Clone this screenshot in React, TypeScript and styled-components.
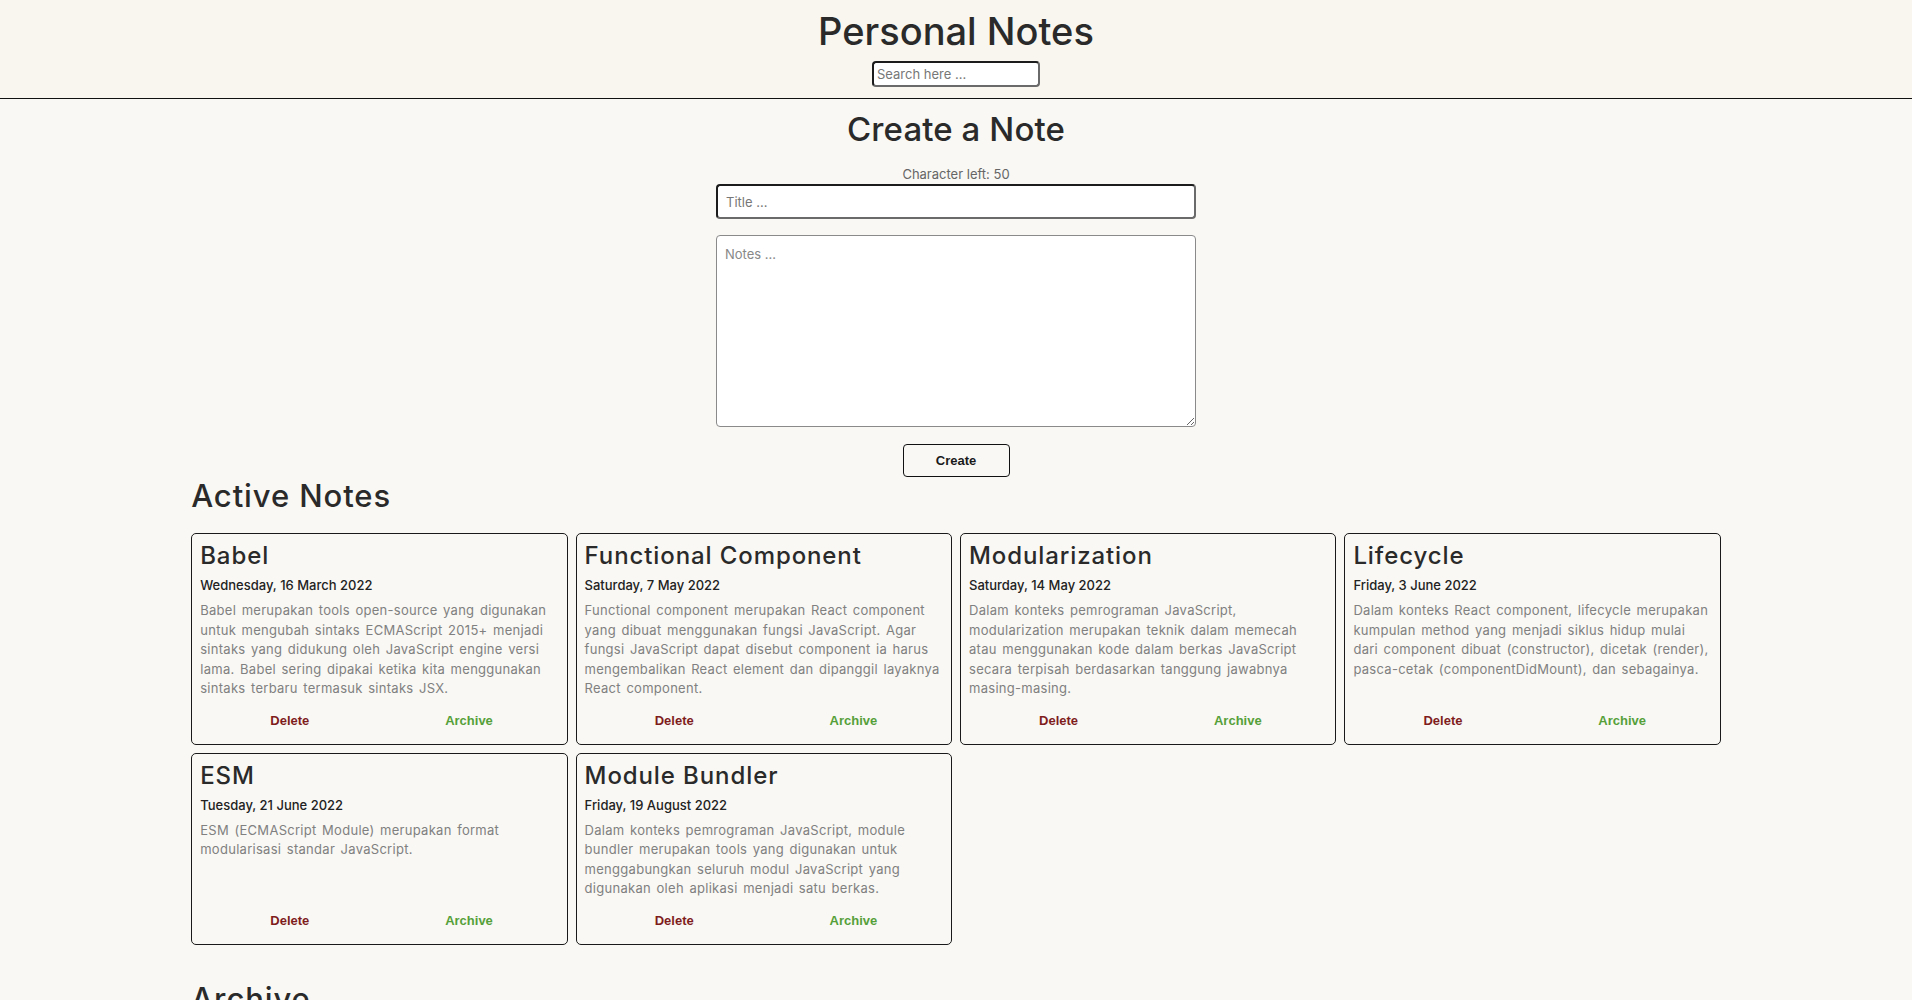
import React from "react";
import styled, { createGlobalStyle } from "styled-components";

const GlobalStyle = createGlobalStyle`
  html, body { margin: 0; padding: 0; }
  body {
    background: #f9f8f4;
    font-family: "Inter", "Noto Sans", sans-serif;
    color: #2b2b2b;
  }
  * { box-sizing: border-box; }
`;

const Header = styled.header`
  display: flex;
  flex-direction: column;
  align-items: center;
  padding: 8px 0 11px;
  background: #f8f6ef;
  border-bottom: 1px solid #111;
`;

const AppTitle = styled.h1`
  margin: 0;
  font-size: 38px;
  line-height: 46px;
  font-weight: 500;
  color: #2a2a2a;
`;

const SearchInput = styled.input`
  margin-top: 7px;
  width: 168px;
  height: 26px;
  padding: 0 3px;
  border: 2px solid;
  border-color: #1c1c1c #6a6a6a #6a6a6a #1c1c1c;
  border-radius: 4px;
  background: #fff;
  font-family: inherit;
  font-size: 13px;
  &::placeholder { color: #777; }
`;

const Main = styled.main`
  width: 80%;
  margin: 0 auto;
  display: flex;
  flex-direction: column;
`;

const FormSection = styled.section`
  display: flex;
  flex-direction: column;
  align-items: center;
`;

const SectionTitle = styled.h2`
  margin: 10px 0 0;
  font-size: 33px;
  line-height: 41px;
  letter-spacing: 0.1px;
  font-weight: 500;
  color: #2a2a2a;
`;

const CharLeft = styled.p`
  margin: 16px 0 2px;
  font-size: 13px;
  line-height: 16px;
  color: #666;
`;

const TitleInput = styled.input`
  width: 480px;
  height: 35px;
  padding: 0 8px;
  border: 2px solid;
  border-color: #1c1c1c #6a6a6a #6a6a6a #1c1c1c;
  border-radius: 4px;
  background: #fff;
  font-family: inherit;
  font-size: 13px;
  &::placeholder { color: #777; }
`;

const NotesArea = styled.textarea`
  margin-top: 16px;
  width: 480px;
  height: 192px;
  padding: 10px 8px;
  border: 1px solid #8a8a8a;
  border-radius: 4px;
  background: #fff;
  font-family: inherit;
  font-size: 13px;
  &::placeholder { color: #888; }
`;

const CreateButton = styled.button`
  margin-top: 17px;
  width: 107px;
  height: 33px;
  border: 1px solid #111;
  border-radius: 4px;
  background: transparent;
  font-family: "Liberation Sans", Arial, sans-serif;
  font-weight: bold;
  font-size: 13px;
  color: #1a1a1a;
`;

const ListTitle = styled.h2<{ $top: number }>`
  margin: ${(p) => p.$top}px 0 19px;
  font-size: 31px;
  line-height: 36px;
  letter-spacing: 0.9px;
  font-weight: 500;
  color: #2a2a2a;
`;

const NotesGrid = styled.div`
  display: grid;
  grid-template-columns: repeat(4, 1fr);
  gap: 8px;
`;

const Card = styled.article`
  display: flex;
  flex-direction: column;
  padding: 8px;
  border: 1px solid #1a1a1a;
  border-radius: 5px;
  background: #f9f8f4;
`;

const CardTitle = styled.h3`
  margin: 0;
  font-size: 24px;
  line-height: 28px;
  letter-spacing: 0.9px;
  font-weight: 500;
  color: #2a2a2a;
`;

const CardDate = styled.p`
  margin: 5px 0 0;
  font-size: 13px;
  line-height: 20px;
  font-weight: 500;
  color: #222;
`;

const CardBody = styled.p`
  margin: 6px 0 6px;
  font-size: 13px;
  line-height: 19.5px;
  letter-spacing: 0.28px;
  word-spacing: 1.6px;
  color: #808080;
`;

const Actions = styled.div`
  margin-top: auto;
  display: flex;
`;

const ActionButton = styled.button<{ $tone: "delete" | "archive" }>`
  flex: 1;
  height: 31px;
  border: none;
  background: transparent;
  font-family: "Liberation Sans", Arial, sans-serif;
  font-weight: bold;
  font-size: 13px;
  color: ${(p) => (p.$tone === "delete" ? "#7f1d1d" : "#56a03a")};
  cursor: pointer;
`;

type Note = { title: string; date: string; body: string };

const notes: Note[] = [
  {
    title: "Babel",
    date: "Wednesday, 16 March 2022",
    body: "Babel merupakan tools open-source yang digunakan untuk mengubah sintaks ECMAScript 2015+ menjadi sintaks yang didukung oleh JavaScript engine versi lama. Babel sering dipakai ketika kita menggunakan sintaks terbaru termasuk sintaks JSX.",
  },
  {
    title: "Functional Component",
    date: "Saturday, 7 May 2022",
    body: "Functional component merupakan React component yang dibuat menggunakan fungsi JavaScript. Agar fungsi JavaScript dapat disebut component ia harus mengembalikan React element dan dipanggil layaknya React component.",
  },
  {
    title: "Modularization",
    date: "Saturday, 14 May 2022",
    body: "Dalam konteks pemrograman JavaScript, modularization merupakan teknik dalam memecah atau menggunakan kode dalam berkas JavaScript secara terpisah berdasarkan tanggung jawabnya masing-masing.",
  },
  {
    title: "Lifecycle",
    date: "Friday, 3 June 2022",
    body: "Dalam konteks React component, lifecycle merupakan kumpulan method yang menjadi siklus hidup mulai dari component dibuat (constructor), dicetak (render), pasca-cetak (componentDidMount), dan sebagainya.",
  },
  {
    title: "ESM",
    date: "Tuesday, 21 June 2022",
    body: "ESM (ECMAScript Module) merupakan format modularisasi standar JavaScript.",
  },
  {
    title: "Module Bundler",
    date: "Friday, 19 August 2022",
    body: "Dalam konteks pemrograman JavaScript, module bundler merupakan tools yang digunakan untuk menggabungkan seluruh modul JavaScript yang digunakan oleh aplikasi menjadi satu berkas.",
  },
];

const NoteCard = ({ note }: { note: Note }) => (
  <Card>
    <CardTitle>{note.title}</CardTitle>
    <CardDate>{note.date}</CardDate>
    <CardBody>{note.body}</CardBody>
    <Actions>
      <ActionButton $tone="delete">Delete</ActionButton>
      <ActionButton $tone="archive">Archive</ActionButton>
    </Actions>
  </Card>
);

export default function App() {
  return (
    <>
      <GlobalStyle />
      <Header>
        <AppTitle>Personal Notes</AppTitle>
        <SearchInput placeholder="Search here ..." />
      </Header>
      <Main>
        <FormSection>
          <SectionTitle>Create a Note</SectionTitle>
          <CharLeft>Character left: 50</CharLeft>
          <TitleInput placeholder="Title ..." />
          <NotesArea placeholder="Notes ..." />
          <CreateButton>Create</CreateButton>
        </FormSection>
        <ListTitle $top={1}>Active Notes</ListTitle>
        <NotesGrid>
          {notes.map((n) => (
            <NoteCard key={n.title} note={n} />
          ))}
        </NotesGrid>
        <ListTitle $top={36}>Archive</ListTitle>
      </Main>
    </>
  );
}
